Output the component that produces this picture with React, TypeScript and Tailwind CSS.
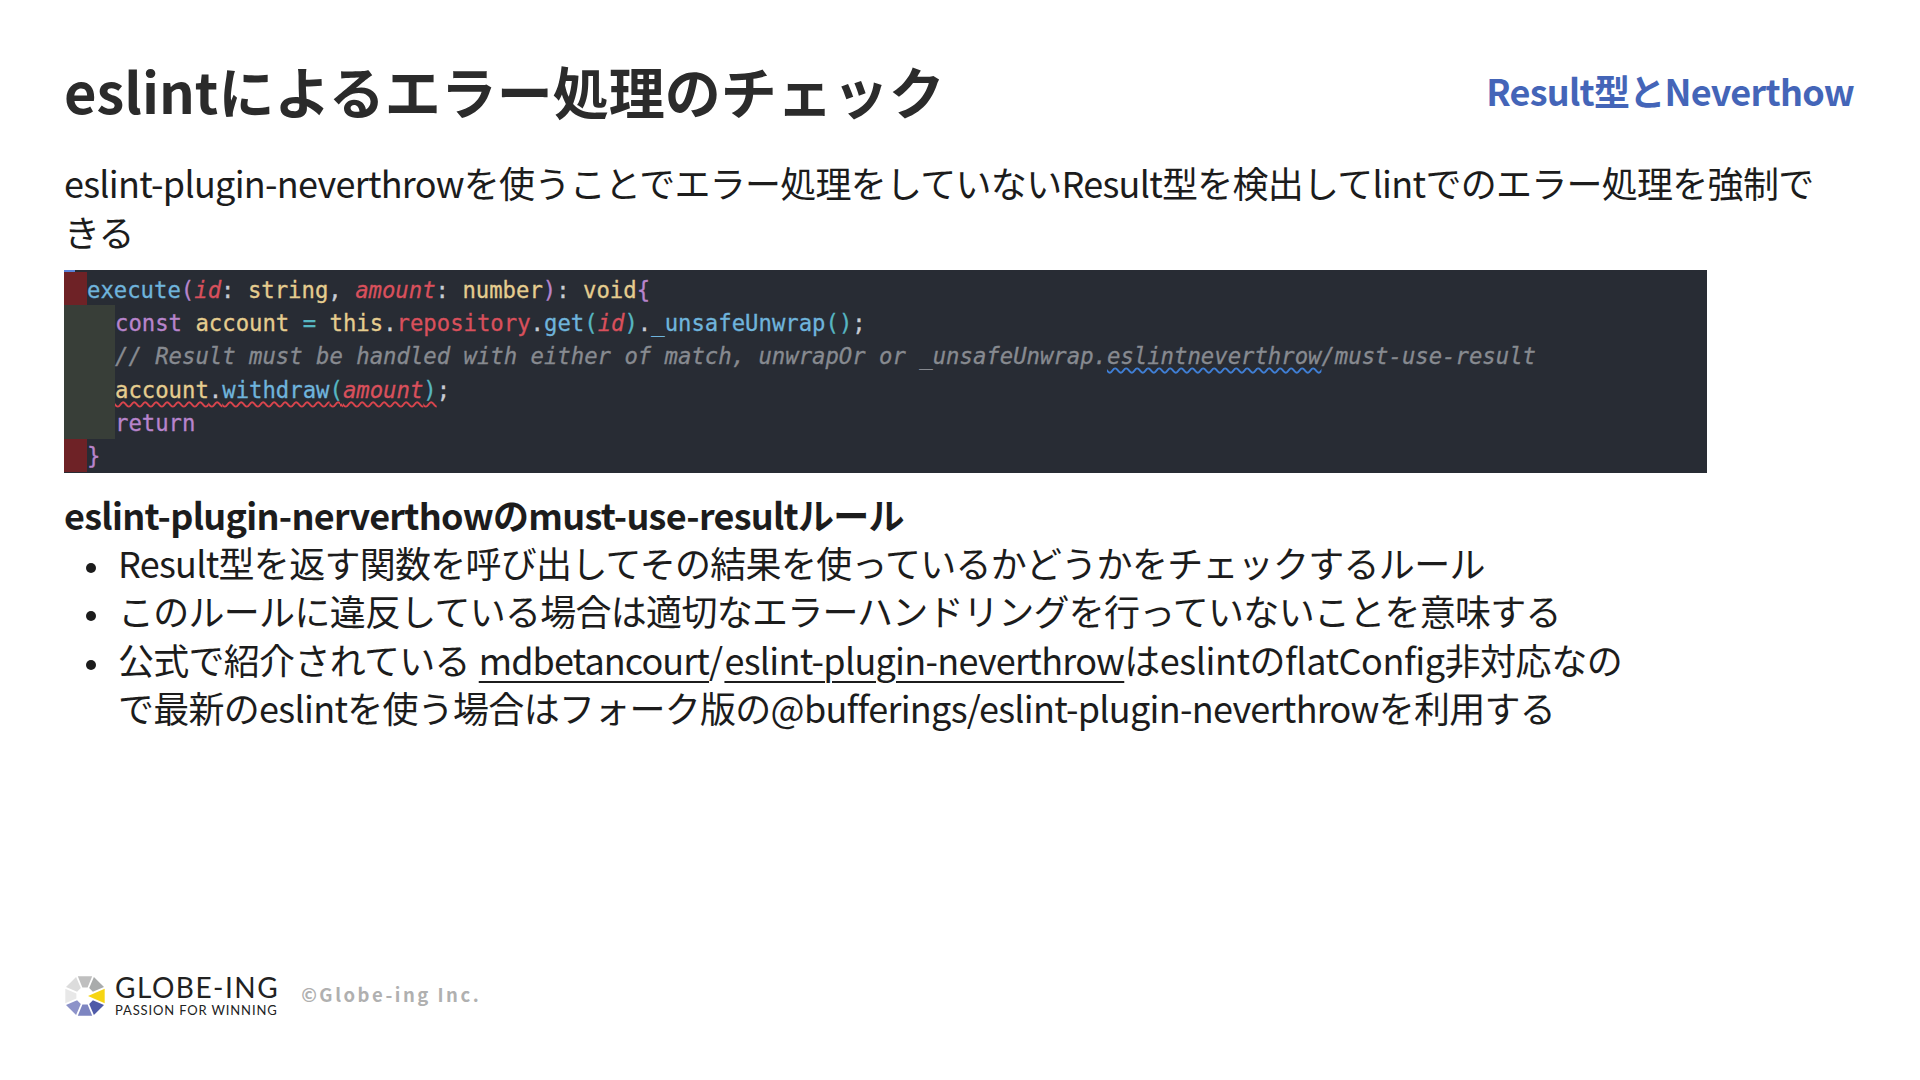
const font = "font-['Noto_Sans_CJK_JP',sans-serif]";

// ring of the logo, clockwise from the top
const logoColors = ["#bfbfbf", "#a9abab", "#f6d512", "#4f5ba8", "#7d85c1", "#8d93c9", "#e8e8e8", "#dcdcdc"];

function Logo() {
  const pt = (deg: number, r: number) => {
    const a = (deg * Math.PI) / 180;
    return `${(21 + r * Math.cos(a)).toFixed(1)},${(23 + r * Math.sin(a)).toFixed(1)}`;
  };
  return (
    <svg width="44" height="44" viewBox="0 0 44 44" className="shrink-0">
      {logoColors.map((c, i) => {
        const mid = -90 + i * 45;
        const points =
          i === 2
            ? [pt(mid - 20, 21), pt(mid + 20, 21), pt(mid, 3)]
            : [pt(mid - 20, 21), pt(mid + 20, 21), pt(mid + 17, 9), pt(mid - 17, 9)];
        return <polygon key={c} points={points.join(" ")} fill={c} />;
      })}
    </svg>
  );
}

function CodeLine({ gutter, children }: { gutter: "red" | "green"; children: React.ReactNode }) {
  return (
    <div className="flex h-[33.4px] items-center">
      <div className={gutter === "red" ? "h-full w-[23px] bg-[#6e2226]" : "h-full w-[51px] bg-[#383e38]"} />
      <div className="whitespace-pre pt-[3px]">{children}</div>
    </div>
  );
}

function Bullet({ children }: { children: React.ReactNode }) {
  return (
    <li className="flex pl-[22px]">
      <span className="mt-[25px] mr-[22px] h-2.5 w-2.5 shrink-0 rounded-full bg-[#1c1c1c]" />
      <div>{children}</div>
    </li>
  );
}

export default function App() {
  return (
    <div className={`${font} flex h-[1080px] w-[1920px] flex-col bg-white px-16 text-[#1c1c1c]`}>
      <header className="flex items-center justify-between pt-[52px] pr-[2px]">
        <h1 className="text-[56px] font-bold leading-[76px] text-[#2b2b2b]">eslintによるエラー処理のチェック</h1>
        <div className="text-[36px] font-bold tracking-[-0.75px] text-[#4465b8]">Result型とNeverthow</div>
      </header>

      <p className="mt-[30px] w-[1760px] text-[36px] leading-[48.5px] tracking-[-0.72px]">
        eslint-plugin-neverthrowを使うことでエラー処理をしていないResult型を検出してlintでのエラー処理を強制できる
      </p>

      <div className="mt-[15px] h-[203px] w-[1643px] bg-[#282c34] font-['DejaVu_Sans_Mono',monospace] text-[22.27px] text-[#c8ccd4] [-webkit-text-stroke:0.3px]">
        <div className="h-[2px] w-[11px] bg-[#5a82d8]" />
        <CodeLine gutter="red">
          <span className="text-[#6fb4dc]">execute</span>
          <span className="text-[#b884cc]">(</span>
          <span className="italic text-[#d9505c]">id</span>
          <span>: </span>
          <span className="text-[#e5cd8f]">string</span>
          <span>, </span>
          <span className="italic text-[#d9505c]">amount</span>
          <span>: </span>
          <span className="text-[#e5cd8f]">number</span>
          <span className="text-[#b884cc]">)</span>
          <span>: </span>
          <span className="text-[#e5cd8f]">void</span>
          <span className="text-[#b884cc]">{"{"}</span>
        </CodeLine>
        <CodeLine gutter="green">
          <span className="text-[#b884cc]">const</span>
          <span className="text-[#e5cd8f]"> account</span>
          <span className="text-[#56b6c2]"> = </span>
          <span className="text-[#e5cd8f]">this</span>
          <span>.</span>
          <span className="text-[#d9505c]">repository</span>
          <span>.</span>
          <span className="text-[#6fb4dc]">get</span>
          <span className="text-[#56b6c2]">(</span>
          <span className="italic text-[#d9505c]">id</span>
          <span className="text-[#56b6c2]">)</span>
          <span>.</span>
          <span className="text-[#6fb4dc]">_unsafeUnwrap</span>
          <span className="text-[#56b6c2]">()</span>
          <span>;</span>
        </CodeLine>
        <CodeLine gutter="green">
          <span className="italic text-[#878a90]">
            {"// Result must be handled with either of match, unwrapOr or _unsafeUnwrap."}
            <span className="underline decoration-[#3f7fd6] decoration-wavy decoration-[1.5px] underline-offset-[3px]">eslintneverthrow</span>
            /must-use-result
          </span>
        </CodeLine>
        <CodeLine gutter="green">
          <span className="underline decoration-[#d9444c] decoration-wavy decoration-[1.5px] underline-offset-[3px]">
            <span className="text-[#e5cd8f]">account</span>
            <span>.</span>
            <span className="text-[#6fb4dc]">withdraw</span>
            <span className="text-[#56b6c2]">(</span>
            <span className="italic text-[#d9505c]">amount</span>
            <span className="text-[#56b6c2]">)</span>
          </span>
          <span>;</span>
        </CodeLine>
        <CodeLine gutter="green">
          <span className="text-[#b884cc]">return</span>
        </CodeLine>
        <CodeLine gutter="red">
          <span className="text-[#b884cc]">{"}"}</span>
        </CodeLine>
      </div>

      <h2 className="mt-[17px] text-[36px] font-bold leading-[48.5px] tracking-[-0.72px]">eslint-plugin-nerverthowのmust-use-resultルール</h2>
      <ul className="-mt-px w-[1570px] text-[36px] leading-[48.5px] tracking-[-0.72px]">
        <Bullet>Result型を返す関数を呼び出してその結果を使っているかどうかをチェックするルール</Bullet>
        <Bullet>このルールに違反している場合は適切なエラーハンドリングを行っていないことを意味する</Bullet>
        <Bullet>
          公式で紹介されている
          <span className="ml-[9px] underline decoration-[1.5px] underline-offset-[6px] tracking-[-0.9px]">mdbetancourt</span>/
          <span className="ml-[2px] underline decoration-[1.5px] underline-offset-[6px]">eslint-plugin-neverthrow</span>
          <span className="tracking-[-0.45px]">はeslintのflatConfig非対応なの</span>
          で最新のeslintを使う場合はフォーク版の@bufferings/eslint-plugin-neverthrowを利用する
        </Bullet>
      </ul>

      <footer className="mt-auto mb-[62px] flex items-center">
        <Logo />
        <div className="ml-[7px] flex flex-col font-['Lato',sans-serif] text-[#222]">
          <span className="text-[28px] leading-[30px] tracking-[1.5px]">GLOBE-ING</span>
          <span className="text-[13px] leading-[16px] tracking-[0.85px]">PASSION FOR WINNING</span>
        </div>
        <span className="ml-[22px] text-[18.5px] font-bold tracking-[2.5px] text-[#b0b0b0]">©Globe-ing Inc.</span>
      </footer>
    </div>
  );
}
